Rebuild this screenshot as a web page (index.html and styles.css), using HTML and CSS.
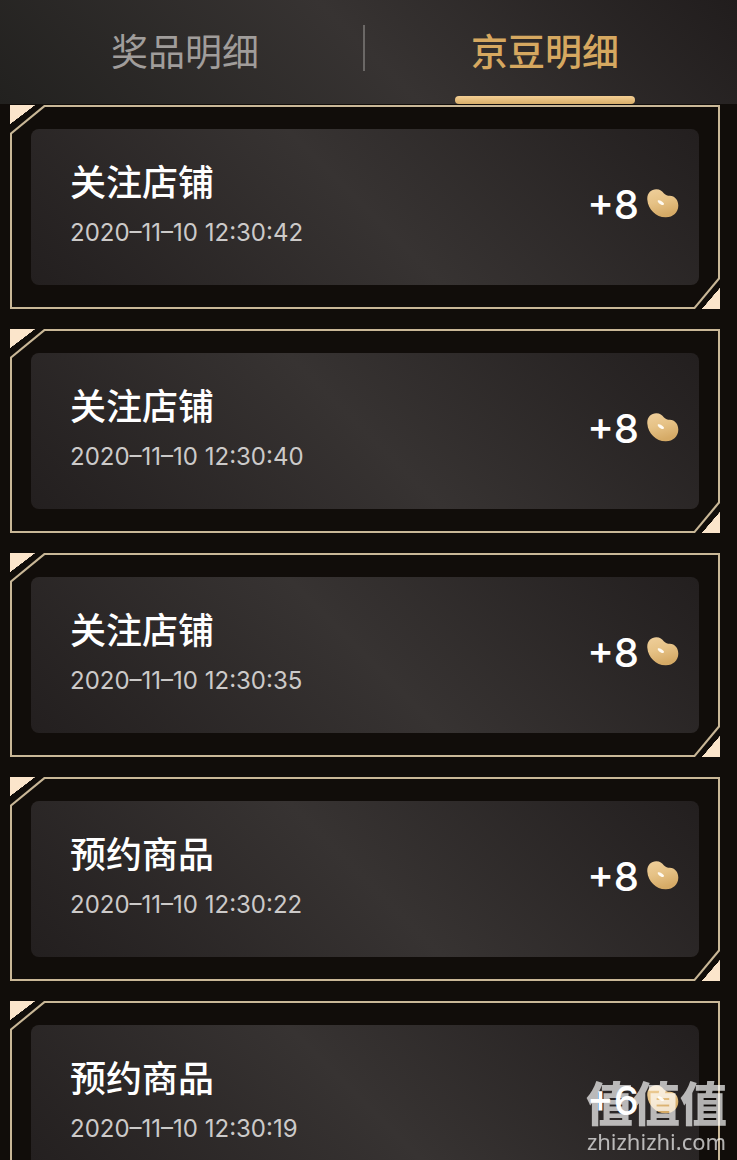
FILE: index.html
```html
<!DOCTYPE html>
<html lang="zh-CN">
<head>
  <meta charset="UTF-8" />
  <meta name="viewport" content="width=device-width, initial-scale=1.0"/>
  <title>京豆明细</title>
  <link rel="stylesheet" href="styles.css">
</head>
<body>
  <svg width="0" height="0" class="sprite" aria-hidden="true">
    <defs>
      <linearGradient id="bean-fill" x1="0" y1="0" x2="0.3" y2="1">
        <stop offset="0" stop-color="#efcf9b"/>
        <stop offset="0.5" stop-color="#e6c286"/>
        <stop offset="1" stop-color="#d5aa66"/>
      </linearGradient>
    </defs>
    <symbol id="bean" viewBox="0 0 32 29">
      <path fill="url(#bean-fill)" d="M0.3 10.5C-0.1 4.5 4 0.3 9.3 0.3C13 0.4 15 2.2 17 4.4C18.8 6.2 20.4 6.6 22.8 6.7C28 7 31.4 11 31.3 16.8C31.2 23.5 26 28.5 18.5 28.3C9 28.2 1 20.5 0.3 10.5Z"/>
      <path fill="#fffaf0" d="M11 11.3C12.5 10.6 15.6 12.2 16.8 14.3C17.4 15.7 16.2 16.4 14.8 16C12.4 15.2 9.8 12.6 11 11.3Z"/>
    </symbol>
  </svg>

  <div class="page">
    <nav class="tabs">
      <button class="tab" type="button">奖品明细</button>
      <button class="tab active" type="button">京豆明细</button>
    </nav>

    <ul class="records">
      <li class="record">
        <div class="record-body">
          <div class="info">
            <h2 class="name">关注店铺</h2>
            <time class="time">2020–11–10 12:30:42</time>
          </div>
          <div class="amount">+8<svg class="bean"><use href="#bean"/></svg></div>
        </div>
      </li>
      <li class="record">
        <div class="record-body">
          <div class="info">
            <h2 class="name">关注店铺</h2>
            <time class="time">2020–11–10 12:30:40</time>
          </div>
          <div class="amount">+8<svg class="bean"><use href="#bean"/></svg></div>
        </div>
      </li>
      <li class="record">
        <div class="record-body">
          <div class="info">
            <h2 class="name">关注店铺</h2>
            <time class="time">2020–11–10 12:30:35</time>
          </div>
          <div class="amount">+8<svg class="bean"><use href="#bean"/></svg></div>
        </div>
      </li>
      <li class="record">
        <div class="record-body">
          <div class="info">
            <h2 class="name">预约商品</h2>
            <time class="time">2020–11–10 12:30:22</time>
          </div>
          <div class="amount">+8<svg class="bean"><use href="#bean"/></svg></div>
        </div>
      </li>
      <li class="record">
        <div class="record-body">
          <div class="info">
            <h2 class="name">预约商品</h2>
            <time class="time">2020–11–10 12:30:19</time>
          </div>
          <div class="amount">+6<svg class="bean"><use href="#bean"/></svg></div>
        </div>
      </li>
    </ul>
  </div>

  <div class="watermark">
    <span class="watermark-name">值值值</span>
    <span class="watermark-site">zhizhizhi.com</span>
  </div>
</body>
</html>
```

FILE: styles.css
```css
* {
  box-sizing: border-box;
}

body {
  margin: 0;
  background: #110d0a;
  color: #fff;
  font-family: Inter, "Noto Sans CJK SC", sans-serif;
}

.sprite {
  position: absolute;
}

.page {
  height: 100vh;
  display: flex;
  flex-direction: column;
}

/* Pestañas */
.tabs {
  flex: none;
  display: grid;
  grid-template-columns: 1fr 1fr;
  height: 104px;
  padding: 0 12px 0 5px;
  background: linear-gradient(45deg, #22211f, #373332 50%, #211d1d);
}

.tab {
  position: relative;
  padding: 0 0 4px;
  border: none;
  background: none;
  color: #a09d9b;
  font-family: "Noto Sans CJK SC", sans-serif;
  font-size: 37px;
  font-weight: 400;
  line-height: 100px;
  cursor: pointer;
}

.tab:first-child::after {
  content: "";
  position: absolute;
  top: 25px;
  right: 0;
  width: 2px;
  height: 46px;
  background: #6b6866;
}

.tab.active {
  color: #d6a860;
  font-weight: 500;
}

.tab.active::after {
  content: "";
  position: absolute;
  bottom: 0;
  left: 50%;
  width: 180px;
  height: 8px;
  margin-left: -90px;
  border-radius: 4px;
  background: linear-gradient(#f4cf94, #d9ae69);
}

/* Lista */
.records {
  flex: 1;
  min-height: 0;
  display: flex;
  flex-direction: column;
  gap: 20px;
  margin: 0;
  padding: 1px 17px 20px 10px;
  list-style: none;
  overflow-y: auto;
  scrollbar-width: none;
}

.record {
  flex: none;
  position: relative;
  isolation: isolate;
  padding: 24px 21px;
  background:
    linear-gradient(to bottom right, #fbe5cb 50%, transparent 51%) left top / 25px 19px no-repeat,
    linear-gradient(to top left, #fbe5cb 50%, transparent 51%) right bottom / 18px 21px no-repeat;
}

/* Marco con esquinas cortadas: línea dorada y relleno oscuro encima */
.record::before,
.record::after {
  content: "";
  position: absolute;
  z-index: -1;
  inset: 0;
  background: #c9b797;
  clip-path: polygon(0 28px, 34px 0, 100% 0, 100% calc(100% - 30px), calc(100% - 25px) 100%, 0 100%);
}

.record::after {
  inset: 2px;
  background: #110d0a;
  clip-path: polygon(0 27px, 33px 0, 100% 0, 100% calc(100% - 29px), calc(100% - 24px) 100%, 0 100%);
}

.record-body {
  display: flex;
  justify-content: space-between;
  align-items: center;
  height: 156px;
  padding: 0 20px 4px 39px;
  border-radius: 8px;
  background: linear-gradient(45deg, #231f1f, #373332 50%, #231f1f);
}

.name {
  margin: 0;
  font-size: 36px;
  font-weight: 500;
  line-height: 52px;
}

.time {
  display: block;
  padding-top: 4px;
  color: #cccac9;
  font-size: 24px;
  line-height: 40px;
}

.amount {
  display: flex;
  align-items: center;
  gap: 8px;
  font-size: 40px;
  font-weight: 500;
  line-height: 48px;
}

.bean {
  width: 32px;
  height: 29px;
  margin-bottom: 4px;
}

/* Marca de agua */
.watermark {
  position: fixed;
  right: 10px;
  bottom: 5px;
  display: flex;
  flex-direction: column;
  align-items: center;
  color: #fff;
  opacity: 0.68;
  pointer-events: none;
}

.watermark-name {
  font-family: "Noto Sans CJK SC", sans-serif;
  font-size: 47px;
  font-weight: 900;
  line-height: 52px;
}

.watermark-site {
  font-family: "Noto Sans", sans-serif;
  font-size: 22px;
  line-height: 28px;
}
```
